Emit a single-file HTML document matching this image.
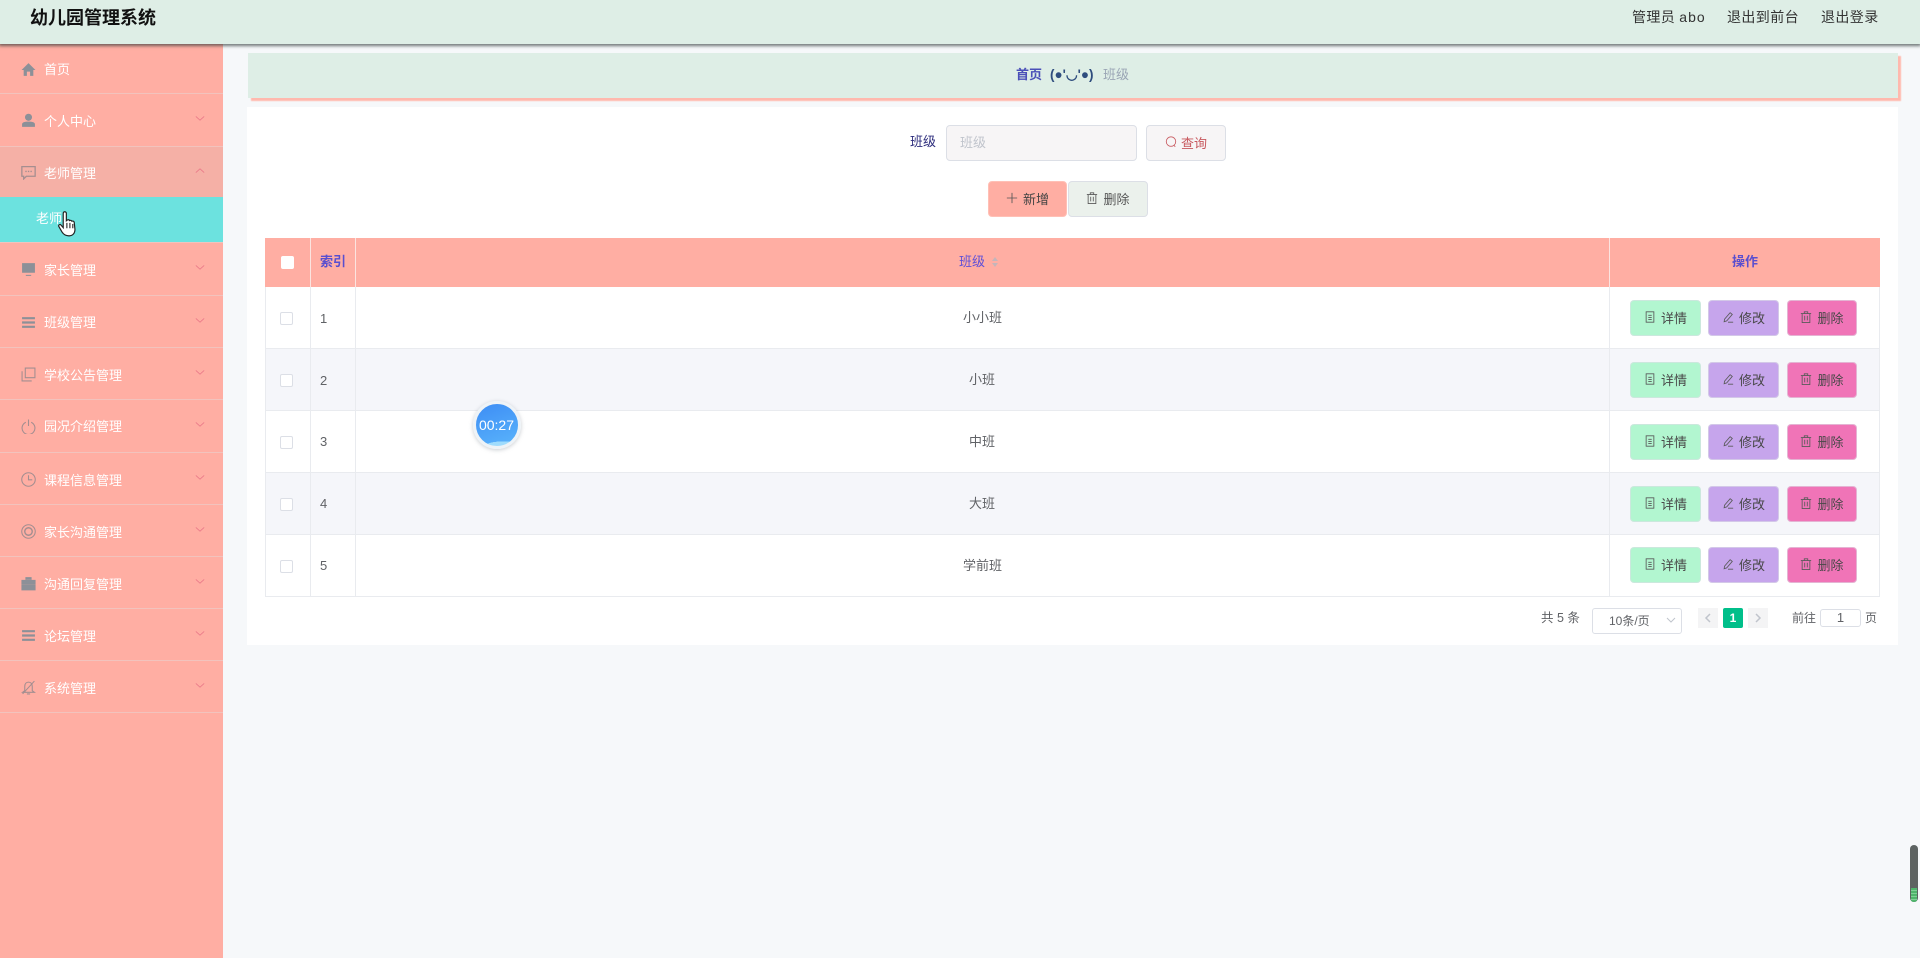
<!DOCTYPE html>
<html lang="zh-CN"><head><meta charset="utf-8"><title>幼儿园管理系统</title>
<style>
*{box-sizing:border-box}
html,body{margin:0;padding:0;width:1920px;height:958px;overflow:hidden;background:#f6f8fa;font-family:"Liberation Sans","Noto Sans CJK SC",sans-serif;font-size:13px;color:#606266}
.a{position:absolute}
.t{position:absolute;white-space:nowrap;line-height:20px}
#hd{left:0;top:0;width:1920px;height:44px;background:#deeee6;box-shadow:0 1px 3px 1px rgba(40,50,50,.65);z-index:5}
#sb{left:0;top:44px;width:223px;height:914px;background:#ffaea3}
.m{position:absolute;left:0;width:223px;border-bottom:1px solid #f2c3bd}
.m .n{position:absolute;left:44px;top:50%;margin-top:-8px;line-height:20px;color:#fff;font-size:13px;white-space:nowrap}
.m svg.i{position:absolute;left:21px;top:50%;margin-top:-7px;width:15px;height:15px}
.m svg.c{position:absolute;left:195px;width:10px;height:7px}
.btn{position:absolute;height:36px;padding-bottom:2px;border-radius:4px;font-size:13px;display:flex;align-items:center;justify-content:center;white-space:nowrap;border:1px solid #dcdfe6}
.btn svg{width:12px;height:12px;margin-right:5px}
.rb{border:1px solid rgba(220,223,230,.6);color:#484848}
.d{background:#b2f6d0;left:1630px;width:71px}
.e{background:#c6a5ec;left:1708px;width:71px}
.x{background:#f074b7;left:1787px;width:70px}
.row{position:absolute;left:265px;width:1615px;height:62px;border-bottom:1px solid #e9ebef}
.vl{position:absolute;width:1px;background:#e9ebef}
.cb{position:absolute;left:280px;width:13px;height:13px;border:1px solid #dcdfe6;background:#fff;border-radius:2px}
</style></head><body>
<svg width="0" height="0" style="position:absolute">
<symbol id="doc" viewBox="0 0 14 14"><path d="M2.500 1h9v12h-9zM5 5h4M5 7.500h4M5 10h4" fill="none" stroke="#5a5a5a" stroke-width="1"/></symbol>
<symbol id="pen" viewBox="0 0 14 14"><path d="M3 9.500 9.500 2l2.500 2-6.500 7.500-3 1zM7 13h6" fill="none" stroke="#5a5a5a" stroke-width="1"/></symbol>
<symbol id="bin" viewBox="0 0 14 14"><path d="M1 3h12M5 3V1h4v2M2.500 3v10.500h9V3M5.500 5.500v5.500M8.500 5.500v5.500" fill="none" stroke="#5a5a5a" stroke-width="1"/></symbol>
<symbol id="chev" viewBox="0 0 12 8"><path d="M1 1.500 6 6l5-4.500" fill="none" stroke="#ea7a89" stroke-width="1"/></symbol>
</svg>

<div id="hd" class="a">
<div class="t" style="left:30px;top:6px;font-size:18px;font-weight:bold;color:#111;line-height:24px">幼儿园管理系统</div>
<div class="t" style="left:1632px;top:7px;color:#333;font-size:14px;letter-spacing:.35px">管理员 <span style="letter-spacing:1px">abo</span></div>
<div class="t" style="left:1727px;top:7px;color:#333;font-size:14px;letter-spacing:.4px">退出到前台</div>
<div class="t" style="left:1821px;top:7px;color:#333;font-size:14px;letter-spacing:.4px">退出登录</div>
</div>

<div id="sb" class="a"></div>
<div class="m" style="top:44px;height:50px"><svg class="i" viewBox="0 0 14 14"><path d="M7 1 0.500 7.500H2.500V13H5.500V9H8.500V13H11.500V7.500H13.500Z" fill="#8c9098"/></svg><span class="n" style="margin-top:-9px">首页</span></div>
<div class="m" style="top:94px;height:53px"><svg class="i" viewBox="0 0 14 14"><circle cx="7" cy="4" r="3.300" fill="#8c9098"/><path d="M1 13v-2.500C1 8.800 3 8 7 8s6 .8 6 2.500V13z" fill="#8c9098"/></svg><span class="n">个人中心</span><svg class="c" style="top:21px"><use href="#chev"/></svg></div>
<div class="m" style="top:147px;height:50px;background:#f5b0a6;border:0"><svg class="i" viewBox="0 0 14 14"><path d="M.8 1.500h12.400v9H5L2.500 13v-2.500H.8z" fill="none" stroke="#a58e90" stroke-width="1.200"/><path d="M4 6h1.300M6.400 6h1.300M8.800 6h1.300" stroke="#a58e90" stroke-width="1.300"/></svg><span class="n">老师管理</span><svg class="c" style="top:20px;transform:scaleY(-1)"><use href="#chev"/></svg></div>
<div class="a" style="left:0;top:197px;width:223px;height:45px;background:#6ce2df"></div>
<div class="t" style="left:36px;top:209px;color:#fff">老师</div>
<div class="a" style="left:0;top:242px;width:223px;height:1px;background:#f2c3bd"></div>
<svg class="a" style="left:57px;top:210px;z-index:9" width="23" height="28" viewBox="0 0 21 26"><path d="M6 2c1.300-.9 2.500 0 2.500 1v7l1-.8c1-.4 1.800 0 2 .6 1-.5 1.900 0 2.100.6 1-.4 2 .1 2.200 1l.7 6.600c0 3.500-2 6-5.500 6-3.500 0-5.200-1.500-6.500-3.500l-3-5.200c-.8-1.300 1.200-2.500 2.100-1.300l2 2.400V3.500c0-.6.100-1.100.4-1.500z" fill="#fff" stroke="#222" stroke-width="1.100"/><path d="M9 12v5M11.800 12v5M14.500 13v4" stroke="#222"/></svg>
<div class="m" style="top:243px;height:53px"><svg class="i" viewBox="0 0 14 14"><path d="M1 1h12v9H1zM4.500 12h5v1h-5z" fill="#8c9098"/></svg><span class="n">家长管理</span><svg class="c" style="top:21px"><use href="#chev"/></svg></div>
<div class="m" style="top:296px;height:52px"><svg class="i" viewBox="0 0 14 14"><path d="M1 2h12v2H1zM1 6h12v2H1zM1 10h12v2H1z" fill="#8c9098"/></svg><span class="n" style="margin-top:-9px">班级管理</span><svg class="c" style="top:21px"><use href="#chev"/></svg></div>
<div class="m" style="top:348px;height:52px"><svg class="i" viewBox="0 0 14 14"><path d="M4 1h9v9H4zM1 4v9h9" fill="none" stroke="#a38e90" stroke-width="1"/></svg><span class="n">学校公告管理</span><svg class="c" style="top:21px"><use href="#chev"/></svg></div>
<div class="m" style="top:400px;height:53px"><svg class="i" viewBox="0 0 14 14"><path d="M4.500 3a6 6 0 1 0 5 0M7 0.500v6" fill="none" stroke="#a38e90" stroke-width="1"/></svg><span class="n" style="margin-top:-9px">园况介绍管理</span><svg class="c" style="top:21px"><use href="#chev"/></svg></div>
<div class="m" style="top:453px;height:52px"><svg class="i" viewBox="0 0 14 14"><circle cx="7" cy="7" r="6.300" fill="none" stroke="#a38e90"/><path d="M7 3v4.300h3.500" fill="none" stroke="#a38e90"/></svg><span class="n">课程信息管理</span><svg class="c" style="top:21px"><use href="#chev"/></svg></div>
<div class="m" style="top:505px;height:52px"><svg class="i" viewBox="0 0 14 14"><circle cx="7" cy="7" r="6.300" fill="none" stroke="#a38e90"/><circle cx="7" cy="7" r="3.500" fill="none" stroke="#a38e90" stroke-width="1.300"/></svg><span class="n">家长沟通管理</span><svg class="c" style="top:21px"><use href="#chev"/></svg></div>
<div class="m" style="top:557px;height:52px"><svg class="i" viewBox="0 0 14 14"><path d="M.8 4h12.400v3.500H.8zM.8 8.500h12.400V13H.8zM4.500 3.500V1.500h5v2" fill="#8c9098" stroke="#8c9098" stroke-width=".8"/></svg><span class="n">沟通回复管理</span><svg class="c" style="top:21px"><use href="#chev"/></svg></div>
<div class="m" style="top:609px;height:52px"><svg class="i" viewBox="0 0 14 14"><path d="M1 2h12v2H1zM1 6h12v2H1zM1 10h12v2H1z" fill="#8c9098"/></svg><span class="n">论坛管理</span><svg class="c" style="top:21px"><use href="#chev"/></svg></div>
<div class="m" style="top:661px;height:52px"><svg class="i" viewBox="0 0 14 14"><path d="M3.500 10V6c0-2.500 1.500-4 3.500-4s3.500 1.500 3.500 4v4l2 1.500H1.500zM5.500 13h3M1.500 13 12.500 1" fill="none" stroke="#a38e90"/></svg><span class="n">系统管理</span><svg class="c" style="top:21px"><use href="#chev"/></svg></div>

<div class="a" style="left:248px;top:53px;width:1650px;height:45px;background:#deeee6;box-shadow:3px 3px 1px #ffb9ae"></div>
<div class="t" style="left:1016px;top:65px;color:#4a4fb8;font-weight:bold;font-size:13px">首页</div>
<div class="t" style="left:1050px;top:65px;color:#2f4d7e;font-size:13.500px;font-weight:bold">(●'◡'●)</div>
<div class="t" style="left:1103px;top:65px;color:#9aa5b5">班级</div>

<div class="a" style="left:247px;top:107px;width:1651px;height:538px;background:#fff"></div>

<div class="t" style="left:910px;top:132px;color:#2c2c7c">班级</div>
<div class="a" style="left:946px;top:125px;width:191px;height:36px;background:#f7f5f6;border:1px solid #dcdfe6;border-radius:4px"></div>
<div class="t" style="left:960px;top:133px;color:#c0c4cc">班级</div>
<div class="btn" style="left:1146px;top:125px;width:80px;background:#f7f5f6;color:#c8595f"><svg viewBox="0 0 14 14" style="margin-right:4px"><circle cx="7" cy="6.500" r="5.500" fill="none" stroke="#c8595f"/><path d="M10.500 11l1.500 1.500" stroke="#c8595f"/></svg>查询</div>
<div class="btn" style="left:988px;top:181px;width:79px;background:#ffaea3;color:#444;border-color:#ffc0b6"><svg viewBox="0 0 14 14"><path d="M7 1v12M1 7h12" stroke="#555" stroke-width="1"/></svg>新增</div>
<div class="btn" style="left:1068px;top:181px;width:80px;background:#ebf1ec;color:#555"><svg><use href="#bin"/></svg>删除</div>

<div class="a" style="left:265px;top:238px;width:1615px;height:49px;background:#ffaea3"></div>
<div class="a" style="left:310px;top:238px;width:1px;height:49px;background:#fbe4e0"></div>
<div class="a" style="left:355px;top:238px;width:1px;height:49px;background:#fbe4e0"></div>
<div class="a" style="left:1609px;top:238px;width:1px;height:49px;background:#fbe4e0"></div>
<div class="a" style="left:281px;top:256px;width:13px;height:13px;background:#fff;border-radius:2px"></div>
<div class="t" style="left:320px;top:252px;color:#5a4fcf;font-weight:bold;font-size:13px">索引</div>
<div class="t" style="left:959px;top:252px;color:#5f50d8;font-size:13px">班级</div>
<svg class="a" style="left:992px;top:257px" width="6" height="10" viewBox="0 0 6 10"><path d="M3 0 6 4H0zM3 10 0 6h6z" fill="#c4b5ba"/></svg>
<div class="t" style="left:1732px;top:252px;color:#5a4fcf;font-weight:bold;font-size:13px">操作</div>

<div class="row" style="top:287px;background:#fff"></div>
<div class="row" style="top:349px;background:#f5f6fa"></div>
<div class="row" style="top:411px;background:#fff"></div>
<div class="row" style="top:473px;background:#f5f6fa"></div>
<div class="row" style="top:535px;height:62px;background:#fff;border-bottom:1px solid #e9ebef"></div>
<div class="vl" style="left:265px;top:287px;height:310px"></div>
<div class="vl" style="left:310px;top:287px;height:310px"></div>
<div class="vl" style="left:355px;top:287px;height:310px"></div>
<div class="vl" style="left:1609px;top:287px;height:310px"></div>
<div class="vl" style="left:1879px;top:287px;height:310px"></div>

<div class="cb" style="top:312px"></div><div class="cb" style="top:374px"></div><div class="cb" style="top:436px"></div><div class="cb" style="top:498px"></div><div class="cb" style="top:560px"></div>
<div class="t" style="left:320px;top:309px">1</div><div class="t" style="left:320px;top:371px">2</div><div class="t" style="left:320px;top:432px">3</div><div class="t" style="left:320px;top:494px">4</div><div class="t" style="left:320px;top:556px">5</div>
<div class="t" style="left:963px;top:308px">小小班</div><div class="t" style="left:969px;top:370px">小班</div><div class="t" style="left:969px;top:432px">中班</div><div class="t" style="left:969px;top:494px">大班</div><div class="t" style="left:963px;top:556px">学前班</div>

<div class="btn rb d" style="top:300px"><svg><use href="#doc"/></svg>详情</div><div class="btn rb e" style="top:300px"><svg><use href="#pen"/></svg>修改</div><div class="btn rb x" style="top:300px"><svg><use href="#bin"/></svg>删除</div>
<div class="btn rb d" style="top:362px"><svg><use href="#doc"/></svg>详情</div><div class="btn rb e" style="top:362px"><svg><use href="#pen"/></svg>修改</div><div class="btn rb x" style="top:362px"><svg><use href="#bin"/></svg>删除</div>
<div class="btn rb d" style="top:424px"><svg><use href="#doc"/></svg>详情</div><div class="btn rb e" style="top:424px"><svg><use href="#pen"/></svg>修改</div><div class="btn rb x" style="top:424px"><svg><use href="#bin"/></svg>删除</div>
<div class="btn rb d" style="top:486px"><svg><use href="#doc"/></svg>详情</div><div class="btn rb e" style="top:486px"><svg><use href="#pen"/></svg>修改</div><div class="btn rb x" style="top:486px"><svg><use href="#bin"/></svg>删除</div>
<div class="btn rb d" style="top:547px"><svg><use href="#doc"/></svg>详情</div><div class="btn rb e" style="top:547px"><svg><use href="#pen"/></svg>修改</div><div class="btn rb x" style="top:547px"><svg><use href="#bin"/></svg>删除</div>

<div class="t" style="left:1541px;top:608px;font-size:12.500px;color:#606266">共 5 条</div>
<div class="a" style="left:1592px;top:608px;width:90px;height:26px;border:1px solid #dcdfe6;border-radius:3px;background:#fff"></div>
<div class="t" style="left:1609px;top:611px;font-size:12px;color:#606266">10条/页</div>
<svg class="a" style="left:1666px;top:617px" width="10" height="7" viewBox="0 0 10 7"><path d="M1 1l4 4 4-4" fill="none" stroke="#c0c4cc"/></svg>
<div class="a" style="left:1698px;top:608px;width:20px;height:20px;background:#f4f4f5"></div>
<svg class="a" style="left:1704px;top:613px" width="8" height="10" viewBox="0 0 8 10"><path d="M6 1 2 5l4 4" fill="none" stroke="#c0c4cc" stroke-width="1.500"/></svg>
<div class="a" style="left:1723px;top:608px;width:20px;height:20px;background:#00bf8a;border-radius:2px;color:#fff;font-weight:bold;font-size:12px;line-height:20px;text-align:center">1</div>
<div class="a" style="left:1748px;top:608px;width:20px;height:20px;background:#f4f4f5"></div>
<svg class="a" style="left:1754px;top:613px" width="8" height="10" viewBox="0 0 8 10"><path d="M2 1l4 4-4 4" fill="none" stroke="#c0c4cc" stroke-width="1.500"/></svg>
<div class="t" style="left:1792px;top:608px;font-size:12px;color:#606266">前往</div>
<div class="a" style="left:1820px;top:609px;width:41px;height:18px;border:1px solid #dcdfe6;border-radius:3px;background:#fff;font-size:13px;line-height:15px;text-align:center">1</div>
<div class="t" style="left:1865px;top:608px;font-size:12px;color:#606266">页</div>

<div class="a" style="left:473px;top:401px;width:48px;height:48px;border-radius:50%;background:radial-gradient(ellipse 70% 18% at 65% 100%,#9fdcfd 0 60%,transparent 62%),linear-gradient(160deg,#3d8df5,#5ab4fb);border:3px solid #eef3f7;box-shadow:0 1px 4px rgba(120,130,140,.4);color:#fff;font-size:14px;line-height:42px;text-align:center;text-indent:-1px">00:27</div>

<div class="a" style="left:1910px;top:845px;width:8px;height:57px;border-radius:4px;background:#5d6362;overflow:hidden"><div class="a" style="left:1px;top:43px;width:6px;height:14px;background:repeating-linear-gradient(#4fb56c 0 2px,#7fd096 2px 3px)"></div></div>
</body></html>
